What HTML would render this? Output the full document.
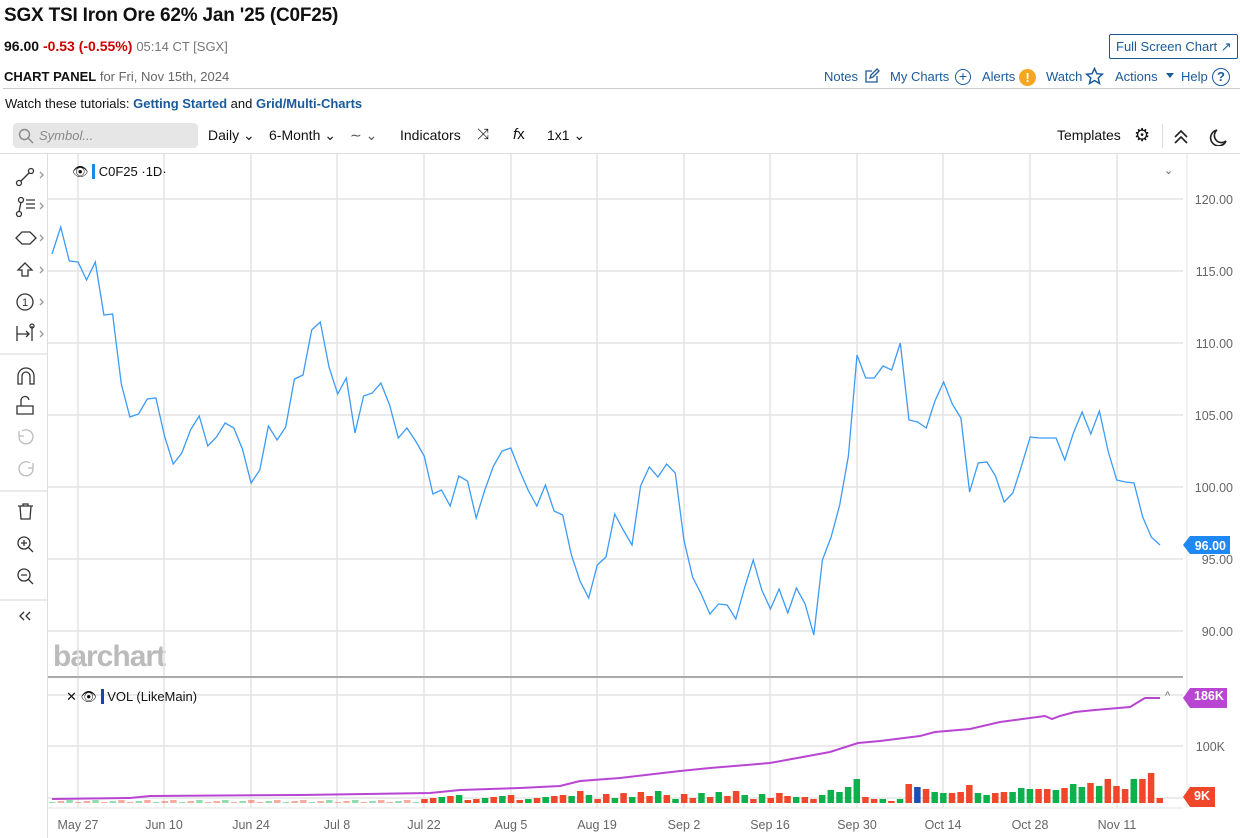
<!DOCTYPE html>
<html><head><meta charset="utf-8"><style>
*{margin:0;padding:0;box-sizing:border-box}
body{width:1240px;height:838px;background:#fff;font-family:"Liberation Sans",sans-serif;color:#111;position:relative;overflow:hidden}
.a{position:absolute;white-space:nowrap}
.blue{color:#1a5a9a}
.n{position:absolute;top:69px;font-size:13px;color:#1a5a9a;white-space:nowrap}
</style></head><body>
<div class="a" style="left:4px;top:5px;font-size:19px;font-weight:bold;letter-spacing:-0.2px">SGX TSI Iron Ore 62% Jan '25 (C0F25)</div>
<div class="a" style="left:4px;top:38px;font-size:14px"><b>96.00</b> <b style="color:#c00">-0.53 (-0.55%)</b> <span style="color:#777;font-size:13px">05:14 CT [SGX]</span></div>
<div class="a" style="left:1109px;top:34px;width:129px;height:25px;border:1px solid #1a5a9a;border-radius:2px;font-size:13px;color:#1a5a9a;padding:4px 0 0 6px">Full Screen Chart ↗</div>
<div class="a" style="left:4px;top:69px;font-size:13px"><b>CHART PANEL</b> <span style="color:#666">for Fri, Nov 15th, 2024</span></div>
<div class="n" style="left:824px">Notes</div>
<svg class="a" style="left:864px;top:68px" width="16" height="16" fill="none" stroke="#1a5a9a" stroke-width="1.3"><path d="M8 3H2v11h11V8"/><path d="M6 10l1-3 6-6 2 2-6 6z"/></svg>
<div class="n" style="left:890px">My Charts</div>
<div class="a" style="left:955px;top:69px;width:16px;height:16px;border:1.5px solid #1a5a9a;border-radius:50%;text-align:center;line-height:12px;font-size:14px;color:#1a5a9a">+</div>
<div class="n" style="left:982px">Alerts</div>
<div class="a" style="left:1019px;top:69px;width:17px;height:17px;background:#f5a623;border-radius:50%;color:#fff;text-align:center;font-weight:bold;line-height:17px;font-size:13px">!</div>
<div class="n" style="left:1046px">Watch</div>
<svg class="a" style="left:1085px;top:67px" width="19" height="19"><path d="M9.5 1.5l2.3 5.2 5.6.5-4.2 3.8 1.3 5.5-5-3-5 3 1.3-5.5-4.2-3.8 5.6-.5z" fill="none" stroke="#1a5a9a" stroke-width="1.5"/></svg>
<div class="n" style="left:1115px">Actions</div>
<div class="a" style="left:1166px;top:73px;width:0;height:0;border-left:4px solid transparent;border-right:4px solid transparent;border-top:5px solid #1a5a9a"></div>
<div class="n" style="left:1181px">Help</div>
<div class="a" style="left:1212px;top:68px;width:18px;height:18px;border:1.5px solid #1a5a9a;border-radius:50%;text-align:center;line-height:15px;font-size:13px;font-weight:bold;color:#1a5a9a">?</div>
<div class="a" style="left:3px;top:88px;width:1237px;height:1px;background:#ccc"></div>
<div class="a" style="left:5px;top:96px;font-size:13px">Watch these tutorials: <b class="blue">Getting Started</b> and <b class="blue">Grid/Multi-Charts</b></div>
<div class="a" style="left:13px;top:123px;width:185px;height:25px;background:#e6e6e6;border-radius:4px;font-size:13px;color:#888;padding:5px 0 0 26px;font-style:italic">Symbol...</div>
<svg class="a" style="left:18px;top:128px" width="16" height="16"><circle cx="6.5" cy="6.5" r="5" fill="none" stroke="#888" stroke-width="1.4"/><path d="M10 10l5 5" stroke="#888" stroke-width="1.4"/></svg>
<div class="a" style="left:208px;top:127px;font-size:14px">Daily ⌄</div>
<div class="a" style="left:269px;top:127px;font-size:14px">6-Month ⌄</div>
<div class="a" style="left:350px;top:127px;font-size:14px;color:#555">∼ ⌄</div>
<div class="a" style="left:400px;top:127px;font-size:14px">Indicators</div>
<div class="a" style="left:477px;top:126px;font-size:15px">⤨</div>
<div class="a" style="left:513px;top:126px;font-size:15px"><i>f</i>x</div>
<div class="a" style="left:547px;top:127px;font-size:14px">1x1 ⌄</div>
<div class="a" style="left:1057px;top:127px;font-size:14px">Templates</div>
<div class="a" style="left:1134px;top:125px;font-size:18px">⚙</div>
<div class="a" style="left:1162px;top:124px;width:1px;height:24px;background:#ddd"></div>
<svg class="a" style="left:1173px;top:128px" width="60" height="18"><path d="M2 9l6-6 6 6M2 15l6-6 6 6" fill="none" stroke="#222" stroke-width="1.6"/><path d="M44 2a8 8 0 1 0 9 11a7 7 0 0 1-9-11z" fill="none" stroke="#222" stroke-width="1.6"/></svg>
<div class="a" style="left:0;top:153px;width:1240px;height:1px;background:#ddd"></div>
<div class="a" style="left:47px;top:153px;width:1px;height:685px;background:#ddd"></div>
<svg class="a" style="left:0;top:154px" width="47" height="480" fill="none" stroke="#333" stroke-width="1.3">
<circle cx="19" cy="29" r="2.5"/><circle cx="31" cy="17" r="2.5"/><path d="M21 27l8-8"/><path d="M40 18l3 3-3 3" stroke="#999"/>
<circle cx="19" cy="60" r="2.5"/><circle cx="21" cy="46" r="2.5"/><path d="M19 58l2-10M26 46h9M26 50h9M26 54h9"/><path d="M40 49l3 3-3 3" stroke="#999"/>
<path d="M16 84l6-6 8 0 6 6-6 6-8 0z"/><path d="M40 81l3 3-3 3" stroke="#999"/>
<path d="M25 109l-7 7h4v6h6v-6h4z"/><path d="M40 113l3 3-3 3" stroke="#999"/>
<circle cx="25" cy="148" r="8"/><text x="22" y="152" font-size="11" fill="#333" stroke="none">1</text><path d="M40 145l3 3-3 3" stroke="#999"/>
<path d="M17 172v15M17 180h12M26 177l3 3-3 3M32 172v15"/><circle cx="32" cy="172" r="2"/><path d="M40 177l3 3-3 3" stroke="#999"/>
<path d="M0 200h47" stroke="#ddd"/>
<path d="M18 230v-8a8 8 0 0 1 16 0v8h-4v-8a4 4 0 0 0-8 0v8z"/>
<path d="M17 260h16v-8h-16z M21 252v-5a4 4 0 0 1 8 -1"/>
<path d="M19 282a7 7 0 1 0 3-5M19 277v5h5" stroke="#bbb"/>
<path d="M33 314a7 7 0 1 1-3-5M33 309v5h-5" stroke="#bbb"/>
<path d="M0 337h47" stroke="#ddd"/>
<path d="M18 352h15M23 352v-2h5v2M20 352l1 13h9l1-13"/>
<circle cx="24" cy="389" r="6"/><path d="M28 393l5 5M24 386v6M21 389h6"/>
<circle cx="24" cy="421" r="6"/><path d="M28 425l5 5M21 421h6"/>
<path d="M0 446h47" stroke="#ddd"/>
<path d="M24 458l-4 4 4 4M30 458l-4 4 4 4"/>
</svg>
<div class="a" style="left:53px;top:640px;font-size:30px;font-weight:bold;color:#bbb;letter-spacing:-1px">barchart</div>
<svg class="a" style="left:48px;top:154px" width="1192" height="684" id="c"></svg>
<div class="a" style="left:72px;top:164px;font-size:13px">👁 <span style="display:inline-block;width:3px;height:15px;background:#1e88e5;vertical-align:-3px"></span> C0F25 ·1D·</div>
<div class="a" style="left:66px;top:689px;font-size:13px">✕ 👁 <span style="display:inline-block;width:3px;height:15px;background:#1e40b0;vertical-align:-3px"></span> VOL (LikeMain)</div>
<script>
var s=document.getElementById('c'),o=48,t=154,h='';
function L(x1,y1,x2,y2,c,w){h+='<line x1="'+(x1-o)+'" y1="'+(y1-t)+'" x2="'+(x2-o)+'" y2="'+(y2-t)+'" stroke="'+c+'" stroke-width="'+(w||1)+'"/>';}
function T(x,y,tx,c,a,sz,fw){h+='<text x="'+(x-o)+'" y="'+(y-t)+'" fill="'+(c||'#666')+'" font-size="'+(sz||12)+'" font-weight="'+(fw||'normal')+'" font-family="Liberation Sans,sans-serif" text-anchor="'+(a||'start')+'">'+tx+'</text>';}
var gx=[78,164,251,337,424,511,597,684,770,857,943,1030,1117],lb=['May 27','Jun 10','Jun 24','Jul 8','Jul 22','Aug 5','Aug 19','Sep 2','Sep 16','Sep 30','Oct 14','Oct 28','Nov 11'];
gx.forEach(function(x,i){L(x,154,x,808,'#e3e3e3',1.5);T(x,829,lb[i],'#666','middle',12.5);});
[199,271,343,415,487,559,631].forEach(function(y,i){L(48,y,1183,y,'#e3e3e3',1.5);T(1233,y+5,(120-5*i).toFixed(2),'#666','end',12.5);});
L(48,677,1183,677,'#aaa',2);
[695,746,798].forEach(function(y){L(48,y,1183,y,'#e3e3e3',1.5);});
T(1225,751,'100K','#666','end',12.5);T(1225,698,'200K','#999','end',12.5);
L(48,808,1183,808,'#e3e3e3',1);L(1187,154,1187,808,'#e3e3e3',1);
var py=[254,227,261,262,280,262,315,314,384,417,414,399,398,436,464,453,430,416,446,437,423,428,449,483,470,426,440,427,379,375,330,322,367,394,378,433,396,393,383,405,438,428,441,456,494,490,506,476,481,518,490,466,451,448,470,490,506,485,511,515,555,581,598,565,557,514,530,545,486,467,477,464,473,540,577,594,614,604,605,619,588,560,590,609,589,613,588,604,635,560,537,505,456,355,378,378,366,370,343,420,422,428,401,382,404,418,492,463,462,476,502,493,466,437,438,438,438,460,433,412,434,411,451,480,482,483,517,537,545];
var sp=(1160-52)/(py.length-1),pts=py.map(function(y,i){return (52+i*sp-o).toFixed(1)+','+(y-t);}).join(' ');
h+='<polyline points="'+pts+'" fill="none" stroke="#3d9bf5" stroke-width="1.3"/>';
var vb=[[7,'r'],[6,'g'],[6,'r'],[4,'r'],[8,'g'],[13,'g'],[11,'g'],[16,'g'],[24,'g'],[6,'r'],[4,'r'],[4,'g'],[2,'r'],[4,'g'],[19,'r'],[16,'b'],[14,'r'],[11,'g'],[10,'g'],[10,'r'],[11,'r'],[18,'r'],[10,'g'],[8,'g'],[10,'r'],[11,'r'],[11,'g'],[15,'g'],[14,'g'],[14,'r'],[14,'r'],[13,'g'],[15,'r'],[19,'g'],[16,'g'],[20,'r'],[17,'g'],[24,'r'],[17,'r'],[14,'r'],[24,'g'],[24,'r'],[30,'r'],[5,'r']];
var C={r:'#f0462a',g:'#0db14b',b:'#1e4fb5'};
var n=py.length,pre=n-vb.length;
for(var i=0;i<pre;i++){var x=52+i*sp,hh=i<43?1+(i%3):(i<60?3+(i*7%6):4+(i*5%9));var c=(i*13%5<2)?'g':'r';h+='<rect x="'+(x-3-o)+'" y="'+(803-hh-t)+'" width="6.5" height="'+hh+'" fill="'+C[c]+'" opacity="'+(i<43?0.45:1)+'"/>';}
vb.forEach(function(b,j){var x=52+(pre+j)*sp;h+='<rect x="'+(x-3.5-o)+'" y="'+(803-b[0]-t)+'" width="6.5" height="'+b[0]+'" fill="'+C[b[1]]+'"/>';});
var ma=[[52,799],[130,798],[150,796],[300,795],[430,793],[460,790],[520,788],[560,786],[580,781],[620,778],[680,771],[710,768],[770,763],[830,752],[858,743],[880,741],[920,736],[935,732],[970,729],[1000,722],[1030,718],[1045,716],[1052,719],[1060,716],[1075,712],[1095,710],[1130,707],[1145,698],[1160,698]];
h+='<polyline points="'+ma.map(function(p){return (p[0]-o)+','+(p[1]-t);}).join(' ')+'" fill="none" stroke="#b946d2" stroke-width="2"/>';
h+='<path d="'+'M'+(1183-o)+','+(545-t)+'l7,-9h40v18h-40z" fill="#1e88f5"/>';T(1226,550,'96.00','#fff','end',12.5,'bold');
h+='<path d="'+'M'+(1183-o)+','+(698-t)+'l7,-10h37v20h-37z" fill="#b946d2"/>';
h+='<path d="'+'M'+(1183-o)+','+(797-t)+'l7,-10h25v20h-25z" fill="#f0462a"/>';
s.innerHTML=h;
</script>
<div class="a" style="left:1194px;top:689px;font-size:12.5px;font-weight:bold;color:#fff">186K</div>
<div class="a" style="left:1194px;top:789px;font-size:12.5px;font-weight:bold;color:#fff">9K</div>
<div class="a" style="left:1164px;top:164px;font-size:11px;color:#666">⌄</div>
<div class="a" style="left:1165px;top:690px;font-size:11px;color:#666">^</div>
</body></html>
